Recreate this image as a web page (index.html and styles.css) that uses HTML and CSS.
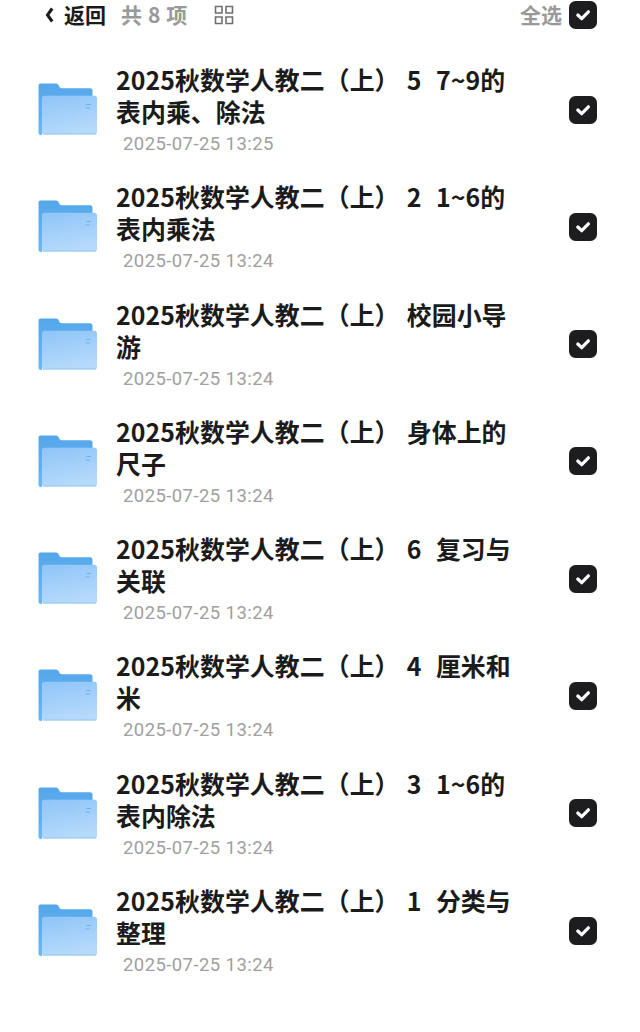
FILE: index.html
```html
<!DOCTYPE html>
<html lang="zh-CN">
<head>
<meta charset="utf-8">
<title>文件列表</title>
<link rel="stylesheet" href="styles.css">
</head>
<body>
<svg class="defs" width="0" height="0" aria-hidden="true">
  <defs>
    <linearGradient id="front" x1="0" y1="0" x2="0.25" y2="1">
      <stop offset="0" stop-color="#8ec5f8"/><stop offset="1" stop-color="#b5d9fb"/>
    </linearGradient>
    <linearGradient id="back" x1="0" y1="0" x2="0" y2="1">
      <stop offset="0" stop-color="#54a7ea"/><stop offset="1" stop-color="#6db7f3"/>
    </linearGradient>
    <symbol id="folder" viewBox="0 0 60 53">
      <path fill="url(#back)" d="M2.500 .5H18q1.700 0 2.500 1.600l1.400 2.400Q22.500 5.300 24 5.300H52q2.500 0 2.500 2.500V40H4V52H3q-2.500 0-2.500-2.500V2.500q0-2 2-2z"/>
      <rect x="4" y="12.800" width="55" height="38.700" rx="2.500" fill="url(#front)"/>
      <path d="M5 51H58" stroke="#95c8f5" stroke-width="1"/>
      <path d="M48 21.500h5M47.500 25h4.500" stroke="#72b1ed" stroke-width="1"/>
    </symbol>
    <symbol id="check" viewBox="0 0 28 28">
      <rect width="28" height="28" rx="6.500" fill="#1d1d1f"/>
      <path d="M8.800 14l3.900 3.700 6.700-6.900" fill="none" stroke="#fff" stroke-width="3.200" stroke-linecap="round" stroke-linejoin="round"/>
    </symbol>
  </defs>
</svg>
<header class="bar">
  <svg class="chevron" viewBox="0 0 10 16"><path d="M8.200 1.500L3.500 8l4.700 6.500" fill="none" stroke="#1b1b1b" stroke-width="3"/></svg>
  <span class="back">返回</span>
  <span class="count">共 8 项</span>
  <svg class="grid" viewBox="0 0 20 20"><path d="M1.500 1.500h6.500v6.500H1.500zM12 1.500h6.500v6.500H12zM1.500 12h6.500v6.500H1.500zM12 12h6.500v6.500H12z" fill="none" stroke="#707070" stroke-width="1.600"/></svg>
  <span class="all">全选</span>
  <svg class="check"><use href="#check"/></svg>
</header>
<main class="list">
  <div class="row"><svg class="folder"><use href="#folder"/></svg><div class="info"><div class="title">2025秋数学人教二（上） 5  7~9的
表内乘、除法</div><div class="date">2025-07-25 13:25</div></div><svg class="check"><use href="#check"/></svg></div>
  <div class="row"><svg class="folder"><use href="#folder"/></svg><div class="info"><div class="title">2025秋数学人教二（上） 2  1~6的
表内乘法</div><div class="date">2025-07-25 13:24</div></div><svg class="check"><use href="#check"/></svg></div>
  <div class="row"><svg class="folder"><use href="#folder"/></svg><div class="info"><div class="title">2025秋数学人教二（上） 校园小导
游</div><div class="date">2025-07-25 13:24</div></div><svg class="check"><use href="#check"/></svg></div>
  <div class="row"><svg class="folder"><use href="#folder"/></svg><div class="info"><div class="title">2025秋数学人教二（上） 身体上的
尺子</div><div class="date">2025-07-25 13:24</div></div><svg class="check"><use href="#check"/></svg></div>
  <div class="row"><svg class="folder"><use href="#folder"/></svg><div class="info"><div class="title">2025秋数学人教二（上） 6  复习与
关联</div><div class="date">2025-07-25 13:24</div></div><svg class="check"><use href="#check"/></svg></div>
  <div class="row"><svg class="folder"><use href="#folder"/></svg><div class="info"><div class="title">2025秋数学人教二（上） 4  厘米和
米</div><div class="date">2025-07-25 13:24</div></div><svg class="check"><use href="#check"/></svg></div>
  <div class="row"><svg class="folder"><use href="#folder"/></svg><div class="info"><div class="title">2025秋数学人教二（上） 3  1~6的
表内除法</div><div class="date">2025-07-25 13:24</div></div><svg class="check"><use href="#check"/></svg></div>
  <div class="row"><svg class="folder"><use href="#folder"/></svg><div class="info"><div class="title">2025秋数学人教二（上） 1  分类与
整理</div><div class="date">2025-07-25 13:24</div></div><svg class="check"><use href="#check"/></svg></div>
</main>
</body>
</html>
```
FILE: styles.css
```css
* { box-sizing: border-box; }
body {
  margin: 0;
  height: 1032px;
  overflow: hidden;
  background: #fff;
  color: #1b1b1b;
  font-family: "Noto Sans CJK SC", sans-serif;
}
.defs { display: block; }
svg { flex: none; }
.bar {
  display: flex;
  align-items: center;
  height: 30px;
  padding: 0 43px 0 44px;
  font-size: 21px;
  line-height: 28px;
  font-weight: 700;
  white-space: nowrap;
}
.bar span { padding-bottom: 2px; }
.chevron { width: 10px; height: 16px; margin-right: 10px; }
.back { width: 57px; }
.count { width: 93px; color: #999; word-spacing: 1.2px; }
.grid { width: 20px; height: 20px; }
.all { margin-left: auto; margin-right: 7px; color: #999; }
.check { display: block; width: 28px; height: 28px; }
.list { padding-top: 33px; }
.row {
  display: flex;
  align-items: flex-start;
  height: 117.3px;
  padding: 0 43px 0 38px;
}
.folder { width: 60px; height: 53px; margin-top: 20px; }
.info { flex: 1; margin-left: 18px; }
.title {
  font-size: 24.9px;
  line-height: 32px;
  font-weight: 700;
  white-space: pre;
  letter-spacing: .06px;
  word-spacing: 1.5px;
}
.date {
  margin-top: 6px;
  padding-left: 7px;
  color: #a0a0a0;
  font: 400 18.500px/22px Roboto, sans-serif;
  letter-spacing: .42px;
}
.row .check { margin-top: 32.500px; }
```
